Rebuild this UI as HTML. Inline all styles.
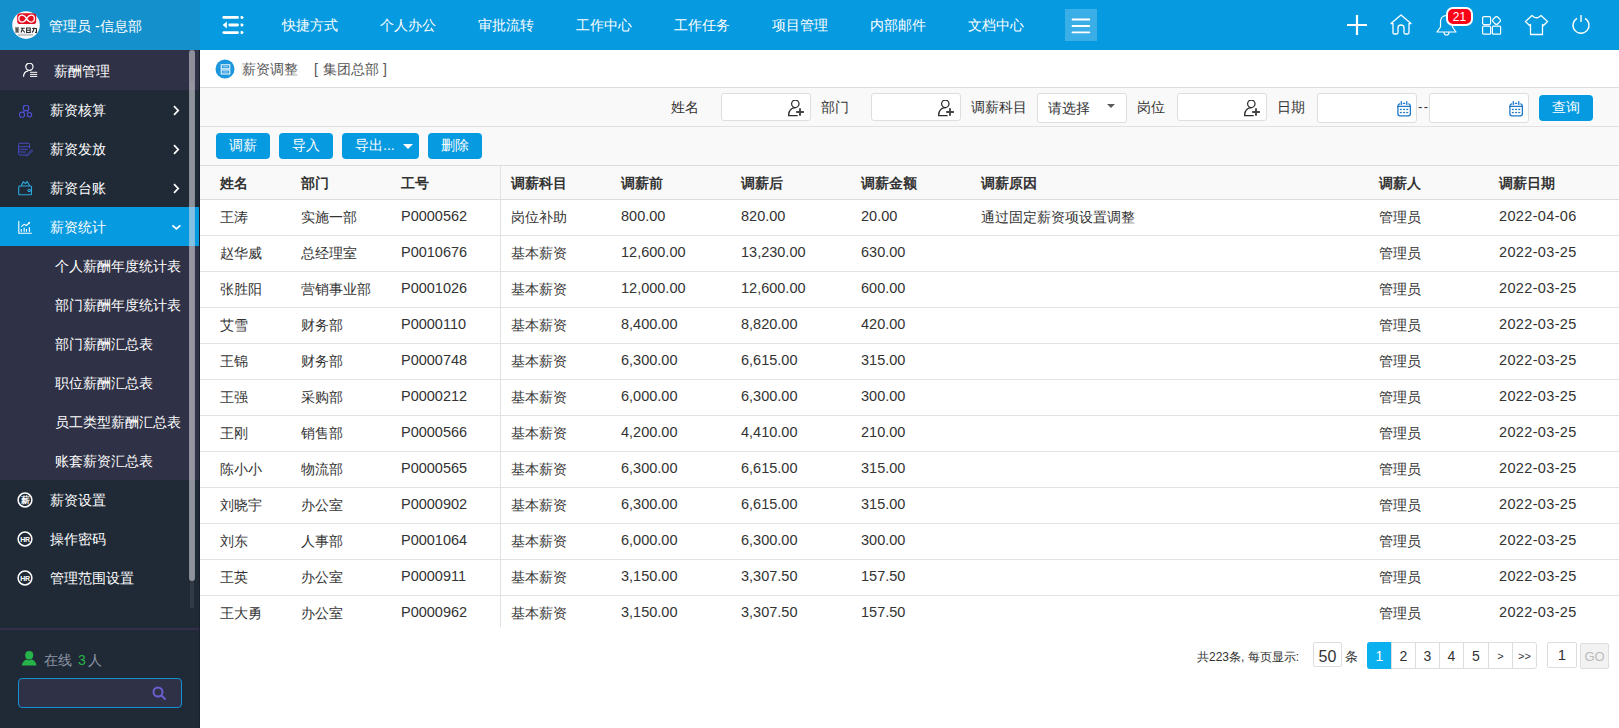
<!DOCTYPE html>
<html><head><meta charset="utf-8">
<style>
*{margin:0;padding:0;box-sizing:border-box}
html,body{width:1619px;height:728px;overflow:hidden;background:#fff;font-family:"Liberation Sans",sans-serif;font-size:14px;color:#333}
.abs{position:absolute}
.c{display:inline-block;vertical-align:top}
#hdl{position:absolute;left:0;top:0;width:200px;height:50px;background:#1491cd}
#hdr{position:absolute;left:200px;top:0;width:1419px;height:50px;background:#069ae0}
.nav{position:absolute;top:0;height:50px;line-height:50px;color:#fff;font-size:14px;white-space:nowrap}
#side{position:absolute;left:0;top:50px;width:200px;height:678px;background:#202a37}
.si{position:absolute;left:0;width:200px;height:39px;line-height:39px;color:#fff;font-size:14px;white-space:nowrap}
.si .t{position:absolute;left:50px;top:1px}
.si .arr{position:absolute;left:171px;top:15px;width:8px;height:8px;border-right:1.6px solid #fff;border-top:1.6px solid #fff;transform:rotate(45deg)}
.sub{position:absolute;left:0;width:200px;height:39px;line-height:39px;color:#fff;font-size:14px;white-space:nowrap}
.sub .t{position:absolute;left:55px;top:1px}
.th{position:absolute;top:173px;line-height:20px;font-weight:bold;color:#333;white-space:nowrap}
.td{position:absolute;line-height:34px;height:35px;color:#333;white-space:nowrap}
.n{font-size:14.5px;line-height:32px}
.dt{letter-spacing:0.35px}
</style></head><body>
<!-- header -->
<div id="hdl">
  <svg class="abs" style="left:12px;top:11px" width="28" height="28" viewBox="0 0 28 28">
    <circle cx="14" cy="14.1" r="13.8" fill="#fafafa"/>
    <rect x="5.2" y="2.2" width="19" height="10.9" rx="3.2" fill="#e20f22"/>
    <path d="M14.6 7.6 C12.2 3 6.8 3 6.8 7.6 C6.8 12.2 12.2 12.2 14.6 7.6 C17 3 22.4 3 22.4 7.6 C22.4 12.2 17 12.2 14.6 7.6Z" fill="none" stroke="#fff" stroke-width="1.3"/>
    <g fill="none" stroke="#2a2a2a" stroke-width="1.1"><path d="M3 17 H7 M5 16.5 V21.5 M3 19 H7.2 M3.2 21 H7"/><path d="M8.8 17.2 H12.8 M10.8 17 L9 21.5 M10.8 19 L12.8 21.5"/><path d="M14.6 17 V21.5 H18.2 V17 Z M14.6 19.2 H18.2"/><path d="M20.2 17.5 H24.4 V21.5 L23 21.2 M22 16.5 Q22 20 20 21.5"/></g>
    <rect x="6" y="22.8" width="15" height="2" fill="#c4c4c4"/>
  </svg>
  <div class="nav" style="left:49px;top:1px"><span class="c" style="width:42px">管理员</span> -<span class="c" style="width:42px">信息部</span></div>
</div>
<div id="hdr"></div>
<svg class="abs" style="left:222px;top:15px" width="24" height="20" viewBox="0 0 24 20">
  <g fill="#fff">
    <rect x="0.4" y="1" width="16.5" height="2.8" rx="1.4"/>
    <rect x="6.3" y="8.6" width="10.6" height="2.8" rx="1.4"/>
    <rect x="0.4" y="16.2" width="16.5" height="2.8" rx="1.4"/>
    <path d="M18.6 1 Q18.6 0.9 19.5 0.9 L20.3 0.9 L21.8 2.4 L20.3 3.9 L19.5 3.9 Q18.6 3.9 18.6 3Z"/>
    <path d="M18.6 8.6 Q18.6 8.5 19.5 8.5 L20.3 8.5 L21.8 10 L20.3 11.5 L19.5 11.5 Q18.6 11.5 18.6 10.6Z"/>
    <path d="M18.6 16.2 Q18.6 16.1 19.5 16.1 L20.3 16.1 L21.8 17.6 L20.3 19.1 L19.5 19.1 Q18.6 19.1 18.6 18.2Z"/>
    <path d="M0.6 10 L4.9 6.6 L4.9 13.4Z"/>
  </g>
</svg>
<div class="nav" style="left:282px">快捷方式</div>
<div class="nav" style="left:380px">个人办公</div>
<div class="nav" style="left:478px">审批流转</div>
<div class="nav" style="left:576px">工作中心</div>
<div class="nav" style="left:674px">工作任务</div>
<div class="nav" style="left:772px">项目管理</div>
<div class="nav" style="left:870px">内部邮件</div>
<div class="nav" style="left:968px">文档中心</div>
<div class="abs" style="left:1065px;top:9px;width:32px;height:32px;background:#3aaee6"></div>
<svg class="abs" style="left:1071px;top:15px" width="20" height="20" viewBox="0 0 20 20">
  <g fill="#fff"><rect x="0.6" y="3.5" width="18.6" height="1.9" rx="0.9"/><rect x="0.6" y="10.1" width="18.6" height="1.9" rx="0.9"/><rect x="0.6" y="16.4" width="18.6" height="1.9" rx="0.9"/></g>
</svg>

<!-- right icons -->
<svg class="abs" style="left:1346px;top:14px" width="22" height="22" viewBox="0 0 22 22"><g stroke="#fff" stroke-width="2.2"><path d="M11 1 V21 M1 11 H21"/></g></svg>
<svg class="abs" style="left:1390px;top:14px" width="22" height="21" viewBox="0 0 22 21"><path d="M1 9.5 L11 1 L21 9.5 L19 9.5 L19 18.5 Q19 20 17.5 20 L15.5 20 Q14 20 14 18.5 L14 14 Q14 11 11 11 Q8 11 8 14 L8 18.5 Q8 20 6.5 20 L4.5 20 Q3 20 3 18.5 L3 9.5Z" fill="none" stroke="#fff" stroke-width="1.3" stroke-linejoin="round"/></svg>
<svg class="abs" style="left:1436px;top:13px" width="21" height="23" viewBox="0 0 21 23"><path d="M10.5 2.5 C6 2.5 4.5 6 4.5 9.5 L4.5 14 L1 19 L20 19 L16.5 14 L16.5 9.5 C16.5 6 15 2.5 10.5 2.5Z M8 19.5 Q8 22 10.5 22 Q13 22 13 19.5" fill="none" stroke="#fff" stroke-width="1.2" stroke-linejoin="round"/></svg>
<div class="abs" style="left:1446px;top:7px;width:27px;height:19px;border:2px solid #fff;border-radius:7px;background:#fb0117;color:#fff;font-size:12px;line-height:17px;text-align:center;font-weight:normal">21</div>
<svg class="abs" style="left:1481px;top:15px" width="21" height="20" viewBox="0 0 21 20"><g fill="none" stroke="#fff" stroke-width="1.2"><rect x="1.6" y="1.6" width="8" height="8" rx="1.5"/><rect x="1.6" y="11.2" width="8" height="8" rx="1"/><rect x="11.4" y="11.2" width="8.2" height="8" rx="1"/><rect x="12.2" y="2.2" width="6.6" height="6.6" rx="2" transform="rotate(45 15.5 5.5)"/></g></svg>
<svg class="abs" style="left:1524px;top:14px" width="25" height="22" viewBox="0 0 25 22"><path d="M8 1.5 L10 3 Q12.5 4.5 15 3 L17 1.5 L23.5 7.5 L19.5 11.5 L18.5 10.5 L18.5 20.5 L6.5 20.5 L6.5 10.5 L5.5 11.5 L1.5 7.5Z" fill="none" stroke="#fff" stroke-width="1.3" stroke-linejoin="round"/></svg>
<svg class="abs" style="left:1571px;top:15px" width="20" height="20" viewBox="0 0 20 20"><g fill="none" stroke="#fff" stroke-width="1.4"><path d="M6 3.3 A8 8 0 1 0 14 3.3"/><path d="M10 0 V7"/></g></svg>

<!-- sidebar -->
<div id="side">
  <div class="abs" style="left:0;top:0;width:200px;height:40px;background:#2f3146"></div>
  <svg class="abs" style="left:22px;top:13px" width="16" height="16" viewBox="0 0 16 16"><g fill="none" stroke="#fff" stroke-width="1.2"><circle cx="7.4" cy="3.8" r="3.6"/><path d="M6.2 7.9 C3.5 8.3 1.6 10.5 1.5 13.8"/></g><g fill="#fff"><rect x="8" y="8.8" width="7.2" height="1"/><rect x="8" y="10.9" width="7.2" height="1"/><rect x="8" y="12.9" width="7.2" height="1"/></g></svg>
  <div class="si" style="top:0;height:40px;line-height:40px;background:transparent"><span class="t" style="left:54px">薪酬管理</span></div>

  <div class="si" style="top:40px"><span class="t">薪资核算</span><svg class="abs" style="left:172px;top:15px" width="9" height="11" viewBox="0 0 9 11"><path d="M2 1.2 L6.2 5.5 L2 9.8" fill="none" stroke="#fff" stroke-width="1.7"/></svg></div>
  <svg class="abs" style="left:19px;top:55px" width="14" height="14" viewBox="0 0 14 14"><g fill="none" stroke="#5050d6" stroke-width="1.1"><circle cx="7" cy="3" r="2.8"/><circle cx="3" cy="9.7" r="2.6"/><circle cx="10.5" cy="9.7" r="2.2"/><path d="M5.5 5.3 L4.4 7.4 M8.5 5.3 L9.3 7.6"/></g></svg>
  <div class="si" style="top:79px"><span class="t">薪资发放</span><svg class="abs" style="left:172px;top:15px" width="9" height="11" viewBox="0 0 9 11"><path d="M2 1.2 L6.2 5.5 L2 9.8" fill="none" stroke="#fff" stroke-width="1.7"/></svg></div>
  <svg class="abs" style="left:18px;top:92px" width="15" height="15" viewBox="0 0 15 15"><g fill="none" stroke="#4d4dcf" stroke-width="0.9"><path d="M2 1.2 H10 Q11.5 1.2 11.5 2.6 V6.5"/><path d="M2 1.2 Q0.6 1.2 0.6 2.6 V11.6 Q0.6 13 2 13 H8"/><path d="M0.8 3.9 Q1 4.7 2.3 4.7 H9.5 Q11.2 4.7 11.4 3.9"/><path d="M0.8 6.5 Q1 7.3 2.3 7.3 H9.8"/><path d="M0.8 9.2 Q1 10 2.3 10 H8"/><path d="M13.6 7.8 L14.6 8.8 L10 13.5 L8.6 13.9 L9 12.4 Z"/></g></svg>
  <div class="si" style="top:118px"><span class="t">薪资台账</span><svg class="abs" style="left:172px;top:15px" width="9" height="11" viewBox="0 0 9 11"><path d="M2 1.2 L6.2 5.5 L2 9.8" fill="none" stroke="#fff" stroke-width="1.7"/></svg></div>
  <svg class="abs" style="left:18px;top:130px" width="16" height="16" viewBox="0 0 16 16"><g fill="none" stroke="#2aaae0" stroke-width="1.1" stroke-linejoin="round"><rect x="0.7" y="6" width="12.8" height="8.8" rx="1"/><path d="M3.2 6 L5.2 1.8 L7.6 3.6 L9.2 1.4 L11.8 6"/><circle cx="11.2" cy="10.4" r="1.2"/></g></svg>
  <div class="si" style="top:157px;background:#069ae0"><span class="t">薪资统计</span><svg class="abs" style="left:171px;top:16px" width="11" height="9" viewBox="0 0 11 9"><path d="M1.4 2.3 L5.4 5.9 L9.4 2.3" fill="none" stroke="#fff" stroke-width="1.7"/></svg></div>
  <svg class="abs" style="left:18px;top:170px" width="15" height="15" viewBox="0 0 15 15"><g fill="none" stroke="#fff" stroke-width="1.1"><path d="M0.8 1 V13.2 H13.8"/><path d="M3.2 6.6 L6.1 4.3 L8.3 5.5 L11.2 3"/></g><path d="M12.2 1.8 L9.8 2.4 L11.6 4.3Z" fill="#fff"/><g fill="#fff"><rect x="2.7" y="9" width="1.1" height="2.8"/><rect x="5.6" y="7.6" width="1.1" height="4.2"/><rect x="7.9" y="9" width="1.1" height="2.8"/><rect x="10.8" y="7.2" width="1.1" height="4.6"/></g></svg>
  <div class="abs" style="left:0;top:196px;width:200px;height:234px;background:#2f3146"></div>
  <div class="sub" style="top:196px"><span class="t">个人薪酬年度统计表</span></div>
  <div class="sub" style="top:235px"><span class="t">部门薪酬年度统计表</span></div>
  <div class="sub" style="top:274px"><span class="t">部门薪酬汇总表</span></div>
  <div class="sub" style="top:313px"><span class="t">职位薪酬汇总表</span></div>
  <div class="sub" style="top:352px"><span class="t">员工类型薪酬汇总表</span></div>
  <div class="sub" style="top:391px"><span class="t">账套薪资汇总表</span></div>

  <div class="si" style="top:430px"><span class="t">薪资设置</span></div>
  <svg class="abs" style="left:17px;top:442px" width="16" height="16" viewBox="0 0 16 16"><circle cx="8" cy="8" r="6.9" fill="none" stroke="#fff" stroke-width="1.5"/><text x="8" y="11.3" font-size="9" font-weight="bold" fill="#fff" text-anchor="middle" font-family="Liberation Sans">薪</text></svg>
  <div class="si" style="top:469px"><span class="t">操作密码</span></div>
  <svg class="abs" style="left:17px;top:481px" width="16" height="16" viewBox="0 0 16 16"><circle cx="8" cy="8" r="6.9" fill="none" stroke="#fff" stroke-width="1.5"/><text x="8" y="10.5" font-size="7" font-weight="bold" fill="#fff" text-anchor="middle" font-family="Liberation Sans" letter-spacing="-0.3">HR</text></svg>
  <div class="si" style="top:508px"><span class="t">管理范围设置</span></div>
  <svg class="abs" style="left:17px;top:520px" width="16" height="16" viewBox="0 0 16 16"><circle cx="8" cy="8" r="6.9" fill="none" stroke="#fff" stroke-width="1.5"/><text x="8" y="10.5" font-size="7" font-weight="bold" fill="#fff" text-anchor="middle" font-family="Liberation Sans" letter-spacing="-0.3">HR</text></svg>

  <div class="abs" style="left:190px;top:31px;width:4px;height:527px;background:rgba(255,255,255,0.08)"></div>
  <div class="abs" style="left:189px;top:0;width:6px;height:531px;border-radius:3px;background:rgba(220,220,225,0.55)"></div>
  <div class="abs" style="left:199px;top:0;width:1px;height:678px;background:#1a202b"></div>
  <div class="abs" style="left:0;top:578px;width:199px;height:2px;background:#342f4a"></div>

  <svg class="abs" style="left:22px;top:601px" width="15" height="15" viewBox="0 0 15 15"><g fill="#25b34a"><ellipse cx="7.2" cy="4.2" rx="4" ry="4.2"/><path d="M0 14.6 C0.3 10.5 3 9.2 5 8.6 L7.2 9.6 L9.4 8.6 C11.4 9.2 14.1 10.5 14.4 14.6Z"/></g></svg>
  <div class="abs" style="left:44px;top:600px;line-height:20px;font-size:14px;color:#8a93a3;white-space:nowrap">在线</div><div class="abs" style="left:78px;top:600px;line-height:20px;font-size:14px;color:#25b34a">3</div><div class="abs" style="left:88px;top:600px;line-height:20px;font-size:14px;color:#8a93a3">人</div>
  <div class="abs" style="left:18px;top:628px;width:164px;height:30px;border:1px solid #1592d2;border-radius:4px;background:#2f3146"></div>
  <svg class="abs" style="left:152px;top:636px" width="15" height="15" viewBox="0 0 15 15"><g fill="none" stroke="#6a5fd0" stroke-width="2"><circle cx="6" cy="6" r="4.5"/><path d="M9.5 9.5 L13.5 13.5"/></g></svg>
</div>

<!-- content -->
<div class="abs" style="left:200px;top:50px;width:1419px;height:38px;background:#fff;border-bottom:1px solid #dcdcdc"></div>
<svg class="abs" style="left:215px;top:59px" width="20" height="20" viewBox="0 0 20 20"><circle cx="10" cy="10" r="9.5" fill="#1c96dc"/><g fill="none" stroke="#fff" stroke-width="1"><rect x="6.2" y="5.8" width="8.6" height="4"/><rect x="6.2" y="11" width="8.6" height="4"/></g><g stroke="#fff" stroke-width="0.8" opacity="0.8"><path d="M7.8 7.8 H13.2 M7.8 13 H13.2"/></g></svg>
<div class="abs" style="left:242px;top:59px;line-height:20px;color:#555;white-space:nowrap">薪资调整</div>
<div class="abs" style="left:314px;top:59px;line-height:20px;color:#555;white-space:nowrap">[</div><div class="abs" style="left:323px;top:59px;line-height:20px;color:#555;white-space:nowrap">集团总部</div><div class="abs" style="left:383px;top:59px;line-height:20px;color:#555;white-space:nowrap">]</div>

<div class="abs" style="left:200px;top:88px;width:1419px;height:78px;background:#f9f9f9;border-bottom:1px solid #dcdcdc"></div>
<div class="abs" style="left:200px;top:126px;width:1419px;height:1px;background:#e2e2e2"></div>
<div class="abs" style="left:671px;top:97px;line-height:20px;color:#333;white-space:nowrap">姓名</div>
<div class="abs" style="left:721px;top:93px;width:90px;height:28px;background:#fff;border:1px solid #dedede;border-radius:3px"></div>
<svg class="abs" style="left:788px;top:100px" width="17" height="17" viewBox="0 0 17 17"><g fill="none" stroke="#2b2b2b" stroke-width="1.25"><circle cx="7.3" cy="3.8" r="3.7"/><path d="M7.6 7.6 C3.5 7.8 0.7 10.6 0.6 15.5 H9.6"/></g><path d="M12 8.3 V15.8 M8.2 12 H15.9" stroke="#444" stroke-width="1.9"/></svg>
<div class="abs" style="left:821px;top:97px;line-height:20px;color:#333;white-space:nowrap">部门</div>
<div class="abs" style="left:871px;top:93px;width:90px;height:28px;background:#fff;border:1px solid #dedede;border-radius:3px"></div>
<svg class="abs" style="left:938px;top:100px" width="17" height="17" viewBox="0 0 17 17"><g fill="none" stroke="#2b2b2b" stroke-width="1.25"><circle cx="7.3" cy="3.8" r="3.7"/><path d="M7.6 7.6 C3.5 7.8 0.7 10.6 0.6 15.5 H9.6"/></g><path d="M12 8.3 V15.8 M8.2 12 H15.9" stroke="#444" stroke-width="1.9"/></svg>
<div class="abs" style="left:971px;top:97px;line-height:20px;color:#333;white-space:nowrap">调薪科目</div>
<div class="abs" style="left:1037px;top:93px;width:90px;height:30px;background:#fff;border:1px solid #dedede;border-radius:3px"></div>
<div class="abs" style="left:1048px;top:98px;line-height:20px;color:#333;white-space:nowrap">请选择</div>
<div class="abs" style="left:1106.5px;top:104px;width:0;height:0;border-left:4.5px solid transparent;border-right:4.5px solid transparent;border-top:4.5px solid #5a5a5a"></div>
<div class="abs" style="left:1137px;top:97px;line-height:20px;color:#333;white-space:nowrap">岗位</div>
<div class="abs" style="left:1177px;top:93px;width:90px;height:28px;background:#fff;border:1px solid #dedede;border-radius:3px"></div>
<svg class="abs" style="left:1244px;top:100px" width="17" height="17" viewBox="0 0 17 17"><g fill="none" stroke="#2b2b2b" stroke-width="1.25"><circle cx="7.3" cy="3.8" r="3.7"/><path d="M7.6 7.6 C3.5 7.8 0.7 10.6 0.6 15.5 H9.6"/></g><path d="M12 8.3 V15.8 M8.2 12 H15.9" stroke="#444" stroke-width="1.9"/></svg>
<div class="abs" style="left:1277px;top:97px;line-height:20px;color:#333;white-space:nowrap">日期</div>
<div class="abs" style="left:1317px;top:93px;width:100px;height:30px;background:#fff;border:1px solid #dedede;border-radius:3px"></div>
<svg class="abs" style="left:1397px;top:101px" width="15" height="16" viewBox="0 0 15 16"><g fill="none" stroke="#1f78c8" stroke-width="1.3" stroke-linecap="round"><path d="M2.6 2.8 Q0.9 3.4 0.9 5.2 V12.8 Q0.9 14.9 3 14.9 H11.2 Q13.4 14.9 13.4 12.8 V5.2 Q13.4 3.4 11.8 2.8"/><path d="M0.9 5.4 H13.4"/><path d="M4.3 0.6 V3.4 M9.8 0.6 V3.4 M6.3 2.3 H7.8"/></g><g fill="#1f78c8"><rect x="2.9" y="7.8" width="1.9" height="1.3"/><rect x="6.2" y="7.8" width="1.9" height="1.3"/><rect x="9.3" y="7.8" width="1.9" height="1.3"/><rect x="2.9" y="10.9" width="1.9" height="1.3"/><rect x="6.2" y="10.9" width="1.9" height="1.3"/><rect x="9.3" y="10.9" width="1.9" height="1.3"/></g></svg>
<div class="abs" style="left:1418px;top:97px;line-height:20px;color:#333;font-size:13px;letter-spacing:1.5px">--</div>
<div class="abs" style="left:1429px;top:93px;width:100px;height:30px;background:#fff;border:1px solid #dedede;border-radius:3px"></div>
<svg class="abs" style="left:1509px;top:101px" width="15" height="16" viewBox="0 0 15 16"><g fill="none" stroke="#1f78c8" stroke-width="1.3" stroke-linecap="round"><path d="M2.6 2.8 Q0.9 3.4 0.9 5.2 V12.8 Q0.9 14.9 3 14.9 H11.2 Q13.4 14.9 13.4 12.8 V5.2 Q13.4 3.4 11.8 2.8"/><path d="M0.9 5.4 H13.4"/><path d="M4.3 0.6 V3.4 M9.8 0.6 V3.4 M6.3 2.3 H7.8"/></g><g fill="#1f78c8"><rect x="2.9" y="7.8" width="1.9" height="1.3"/><rect x="6.2" y="7.8" width="1.9" height="1.3"/><rect x="9.3" y="7.8" width="1.9" height="1.3"/><rect x="2.9" y="10.9" width="1.9" height="1.3"/><rect x="6.2" y="10.9" width="1.9" height="1.3"/><rect x="9.3" y="10.9" width="1.9" height="1.3"/></g></svg>
<div class="abs" style="left:1539px;top:95px;width:54px;height:26px;background:#069ae0;border-radius:4px;color:#fff;line-height:25px;text-align:center">查询</div>
<div class="abs" style="left:216px;top:133px;width:54px;height:26px;background:#069ae0;border-radius:4px;color:#fff;line-height:25px;text-align:center">调薪</div>
<div class="abs" style="left:279px;top:133px;width:54px;height:26px;background:#069ae0;border-radius:4px;color:#fff;line-height:25px;text-align:center">导入</div>
<div class="abs" style="left:342px;top:133px;width:77px;height:26px;background:#069ae0;border-radius:4px;color:#fff;line-height:25px;padding-left:13px"><span class="c" style="width:28px">导出</span>...</div>
<div class="abs" style="left:403px;top:144px;width:0;height:0;border-left:5px solid transparent;border-right:5px solid transparent;border-top:5px solid #fff"></div>
<div class="abs" style="left:428px;top:133px;width:54px;height:26px;background:#069ae0;border-radius:4px;color:#fff;line-height:25px;text-align:center">删除</div>
<!-- table -->
<div class="abs" style="left:200px;top:166px;width:1419px;height:33px;background:#f9f9f9"></div>
<div class="abs" style="left:200px;top:199px;width:1419px;height:1px;background:#dcdcdc"></div>
<div class="th" style="left:220px">姓名</div>
<div class="th" style="left:301px">部门</div>
<div class="th" style="left:401px">工号</div>
<div class="th" style="left:511px">调薪科目</div>
<div class="th" style="left:621px">调薪前</div>
<div class="th" style="left:741px">调薪后</div>
<div class="th" style="left:861px">调薪金额</div>
<div class="th" style="left:981px">调薪原因</div>
<div class="th" style="left:1379px">调薪人</div>
<div class="th" style="left:1499px">调薪日期</div>
<div class="td" style="left:220px;top:200px">王涛</div>
<div class="td" style="left:301px;top:200px">实施一部</div>
<div class="td n" style="left:401px;top:200px">P0000562</div>
<div class="td" style="left:511px;top:200px">岗位补助</div>
<div class="td n" style="left:621px;top:200px">800.00</div>
<div class="td n" style="left:741px;top:200px">820.00</div>
<div class="td n" style="left:861px;top:200px">20.00</div>
<div class="td" style="left:981px;top:200px">通过固定薪资项设置调整</div>
<div class="td" style="left:1379px;top:200px">管理员</div>
<div class="td n dt" style="left:1499px;top:200px">2022-04-06</div>
<div class="abs" style="left:200px;top:235px;width:1419px;height:1px;background:#e2e2e2"></div>
<div class="td" style="left:220px;top:236px">赵华威</div>
<div class="td" style="left:301px;top:236px">总经理室</div>
<div class="td n" style="left:401px;top:236px">P0010676</div>
<div class="td" style="left:511px;top:236px">基本薪资</div>
<div class="td n" style="left:621px;top:236px">12,600.00</div>
<div class="td n" style="left:741px;top:236px">13,230.00</div>
<div class="td n" style="left:861px;top:236px">630.00</div>
<div class="td" style="left:1379px;top:236px">管理员</div>
<div class="td n dt" style="left:1499px;top:236px">2022-03-25</div>
<div class="abs" style="left:200px;top:271px;width:1419px;height:1px;background:#e2e2e2"></div>
<div class="td" style="left:220px;top:272px">张胜阳</div>
<div class="td" style="left:301px;top:272px">营销事业部</div>
<div class="td n" style="left:401px;top:272px">P0001026</div>
<div class="td" style="left:511px;top:272px">基本薪资</div>
<div class="td n" style="left:621px;top:272px">12,000.00</div>
<div class="td n" style="left:741px;top:272px">12,600.00</div>
<div class="td n" style="left:861px;top:272px">600.00</div>
<div class="td" style="left:1379px;top:272px">管理员</div>
<div class="td n dt" style="left:1499px;top:272px">2022-03-25</div>
<div class="abs" style="left:200px;top:307px;width:1419px;height:1px;background:#e2e2e2"></div>
<div class="td" style="left:220px;top:308px">艾雪</div>
<div class="td" style="left:301px;top:308px">财务部</div>
<div class="td n" style="left:401px;top:308px">P0000110</div>
<div class="td" style="left:511px;top:308px">基本薪资</div>
<div class="td n" style="left:621px;top:308px">8,400.00</div>
<div class="td n" style="left:741px;top:308px">8,820.00</div>
<div class="td n" style="left:861px;top:308px">420.00</div>
<div class="td" style="left:1379px;top:308px">管理员</div>
<div class="td n dt" style="left:1499px;top:308px">2022-03-25</div>
<div class="abs" style="left:200px;top:343px;width:1419px;height:1px;background:#e2e2e2"></div>
<div class="td" style="left:220px;top:344px">王锦</div>
<div class="td" style="left:301px;top:344px">财务部</div>
<div class="td n" style="left:401px;top:344px">P0000748</div>
<div class="td" style="left:511px;top:344px">基本薪资</div>
<div class="td n" style="left:621px;top:344px">6,300.00</div>
<div class="td n" style="left:741px;top:344px">6,615.00</div>
<div class="td n" style="left:861px;top:344px">315.00</div>
<div class="td" style="left:1379px;top:344px">管理员</div>
<div class="td n dt" style="left:1499px;top:344px">2022-03-25</div>
<div class="abs" style="left:200px;top:379px;width:1419px;height:1px;background:#e2e2e2"></div>
<div class="td" style="left:220px;top:380px">王强</div>
<div class="td" style="left:301px;top:380px">采购部</div>
<div class="td n" style="left:401px;top:380px">P0000212</div>
<div class="td" style="left:511px;top:380px">基本薪资</div>
<div class="td n" style="left:621px;top:380px">6,000.00</div>
<div class="td n" style="left:741px;top:380px">6,300.00</div>
<div class="td n" style="left:861px;top:380px">300.00</div>
<div class="td" style="left:1379px;top:380px">管理员</div>
<div class="td n dt" style="left:1499px;top:380px">2022-03-25</div>
<div class="abs" style="left:200px;top:415px;width:1419px;height:1px;background:#e2e2e2"></div>
<div class="td" style="left:220px;top:416px">王刚</div>
<div class="td" style="left:301px;top:416px">销售部</div>
<div class="td n" style="left:401px;top:416px">P0000566</div>
<div class="td" style="left:511px;top:416px">基本薪资</div>
<div class="td n" style="left:621px;top:416px">4,200.00</div>
<div class="td n" style="left:741px;top:416px">4,410.00</div>
<div class="td n" style="left:861px;top:416px">210.00</div>
<div class="td" style="left:1379px;top:416px">管理员</div>
<div class="td n dt" style="left:1499px;top:416px">2022-03-25</div>
<div class="abs" style="left:200px;top:451px;width:1419px;height:1px;background:#e2e2e2"></div>
<div class="td" style="left:220px;top:452px">陈小小</div>
<div class="td" style="left:301px;top:452px">物流部</div>
<div class="td n" style="left:401px;top:452px">P0000565</div>
<div class="td" style="left:511px;top:452px">基本薪资</div>
<div class="td n" style="left:621px;top:452px">6,300.00</div>
<div class="td n" style="left:741px;top:452px">6,615.00</div>
<div class="td n" style="left:861px;top:452px">315.00</div>
<div class="td" style="left:1379px;top:452px">管理员</div>
<div class="td n dt" style="left:1499px;top:452px">2022-03-25</div>
<div class="abs" style="left:200px;top:487px;width:1419px;height:1px;background:#e2e2e2"></div>
<div class="td" style="left:220px;top:488px">刘晓宇</div>
<div class="td" style="left:301px;top:488px">办公室</div>
<div class="td n" style="left:401px;top:488px">P0000902</div>
<div class="td" style="left:511px;top:488px">基本薪资</div>
<div class="td n" style="left:621px;top:488px">6,300.00</div>
<div class="td n" style="left:741px;top:488px">6,615.00</div>
<div class="td n" style="left:861px;top:488px">315.00</div>
<div class="td" style="left:1379px;top:488px">管理员</div>
<div class="td n dt" style="left:1499px;top:488px">2022-03-25</div>
<div class="abs" style="left:200px;top:523px;width:1419px;height:1px;background:#e2e2e2"></div>
<div class="td" style="left:220px;top:524px">刘东</div>
<div class="td" style="left:301px;top:524px">人事部</div>
<div class="td n" style="left:401px;top:524px">P0001064</div>
<div class="td" style="left:511px;top:524px">基本薪资</div>
<div class="td n" style="left:621px;top:524px">6,000.00</div>
<div class="td n" style="left:741px;top:524px">6,300.00</div>
<div class="td n" style="left:861px;top:524px">300.00</div>
<div class="td" style="left:1379px;top:524px">管理员</div>
<div class="td n dt" style="left:1499px;top:524px">2022-03-25</div>
<div class="abs" style="left:200px;top:559px;width:1419px;height:1px;background:#e2e2e2"></div>
<div class="td" style="left:220px;top:560px">王英</div>
<div class="td" style="left:301px;top:560px">办公室</div>
<div class="td n" style="left:401px;top:560px">P0000911</div>
<div class="td" style="left:511px;top:560px">基本薪资</div>
<div class="td n" style="left:621px;top:560px">3,150.00</div>
<div class="td n" style="left:741px;top:560px">3,307.50</div>
<div class="td n" style="left:861px;top:560px">157.50</div>
<div class="td" style="left:1379px;top:560px">管理员</div>
<div class="td n dt" style="left:1499px;top:560px">2022-03-25</div>
<div class="abs" style="left:200px;top:595px;width:1419px;height:1px;background:#e2e2e2"></div>
<div class="td" style="left:220px;top:596px">王大勇</div>
<div class="td" style="left:301px;top:596px">办公室</div>
<div class="td n" style="left:401px;top:596px">P0000962</div>
<div class="td" style="left:511px;top:596px">基本薪资</div>
<div class="td n" style="left:621px;top:596px">3,150.00</div>
<div class="td n" style="left:741px;top:596px">3,307.50</div>
<div class="td n" style="left:861px;top:596px">157.50</div>
<div class="td" style="left:1379px;top:596px">管理员</div>
<div class="td n dt" style="left:1499px;top:596px">2022-03-25</div>
<div class="abs" style="left:500px;top:166px;width:1px;height:461px;background:#e2e2e2"></div>
<!-- pager -->
<div class="abs" style="left:1197px;top:647px;line-height:20px;font-size:12px;color:#333;white-space:nowrap"><span class="c" style="width:12px">共</span>223<span class="c" style="width:12px">条</span>, <span class="c" style="width:48px">每页显示</span>:</div>
<div class="abs" style="left:1313px;top:642px;width:29px;height:25px;border:1px solid #ddd;border-radius:2px;background:#fff;font-size:16px;line-height:27px;text-align:center;color:#333">50</div>
<div class="abs" style="left:1345px;top:647px;line-height:20px;font-size:13px;color:#333">条</div>
<div class="abs" style="left:1367px;top:642px;width:170px;height:27px;border:1px solid #ddd;border-radius:3px;background:#fff"></div>
<div class="abs" style="left:1367px;top:642px;width:25px;height:27px;background:#0bb1ee;color:#fff;border-radius:3px 0 0 3px;line-height:28px;text-align:center;font-size:14px">1</div>
<div class="abs" style="left:1391px;top:642px;width:24px;height:27px;border-left:1px solid #ddd;color:#333;line-height:28px;text-align:center;font-size:14px">2</div>
<div class="abs" style="left:1415px;top:642px;width:24px;height:27px;border-left:1px solid #ddd;color:#333;line-height:28px;text-align:center;font-size:14px">3</div>
<div class="abs" style="left:1439px;top:642px;width:24px;height:27px;border-left:1px solid #ddd;color:#333;line-height:28px;text-align:center;font-size:14px">4</div>
<div class="abs" style="left:1463px;top:642px;width:25px;height:27px;border-left:1px solid #ddd;color:#333;line-height:28px;text-align:center;font-size:14px">5</div>
<div class="abs" style="left:1488px;top:642px;width:24px;height:27px;border-left:1px solid #ddd;color:#333;line-height:28px;text-align:center;font-size:11px">&gt;</div>
<div class="abs" style="left:1512px;top:642px;width:24px;height:27px;border-left:1px solid #ddd;color:#333;line-height:28px;text-align:center;font-size:11px">&gt;&gt;</div>
<div class="abs" style="left:1547px;top:642px;width:30px;height:26px;border:1px solid #ddd;border-radius:2px;background:#fff;font-size:15px;line-height:24px;text-align:center;color:#333">1</div>
<div class="abs" style="left:1580px;top:643px;width:29px;height:26px;border:1px solid #ddd;border-radius:2px;background:#f2f2f2;font-size:13px;line-height:26px;text-align:center;color:#bbb">GO</div>
</body></html>
